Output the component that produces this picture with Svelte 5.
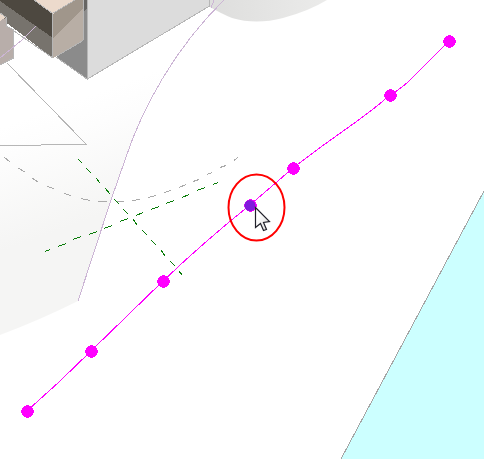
<script>
  const nodes = [[27, 411], [91, 351], [163, 281], [293, 168], [390, 95], [449, 41]];
</script>

<main>
  <svg viewBox="0 0 484 459" role="img" aria-label="Spline with control points">
    <defs>
      <linearGradient id="ground" gradientUnits="userSpaceOnUse" x1="62" y1="105" x2="102" y2="215">
        <stop offset="0" stop-color="#ffffff" />
        <stop offset=".25" stop-color="#fdfdfd" />
        <stop offset="1" stop-color="#f5f5f4" />
      </linearGradient>
      <linearGradient id="disc" gradientUnits="userSpaceOnUse" x1="215" y1="0" x2="325" y2="0">
        <stop offset="0" stop-color="#dededd" />
        <stop offset="1" stop-color="#ebebea" />
      </linearGradient>
      <linearGradient id="pointer" x1="0" y1="0" x2="1" y2="1">
        <stop offset=".3" stop-color="#ffffff" />
        <stop offset="1" stop-color="#d8d8d8" />
      </linearGradient>
    </defs>

    <path fill="url(#ground)" d="M0 60H171C151 92 135 129 125 160L111 200L78 301Q40 320 0 335Z" />
    <path fill="url(#disc)" d="M210 0V7Q222 14 232 18Q256 25 283 18Q309 11 327 0Z" />

    <g shape-rendering="crispEdges">
      <path fill="#dcdcdc" d="M87 0H210V6L87 79Z" />
      <path fill="#8b8b8b" d="M83 0H87V79L56 57L83 40Z" />
      <path fill="#666563" d="M83 0H87V9L83 12Z" />
      <path fill="#77736d" d="M0 0H53V58L0 18Z" />
      <path fill="#4d4840" d="M0 0H36L53 14V38L0 1Z" />
      <path fill="#ecdacc" d="M34 0H75L53 14Z" />
      <path fill="#a0968b" d="M53 14L75 0H83V9L53 38Z" />
      <path fill="#b8aea5" d="M53 38L83 9V41L53 58Z" />
      <path fill="#b8aeaa" d="M0 20L7 18V26L13 30V58L0 65Z" />
      <path fill="#ecdacc" d="M0 13L6 17L0 21Z" />
    </g>

    <g class="line" stroke="#b6b6b6">
      <path d="M34 0L52.500 13.500L75 0M52.500 14V58M57 56L83 40.500M83.500 0V40M87.500 0V79L209.500 6V0M53 58L14 31M56 57L87 79M0 13L6.500 17.500V26L13.500 30V58L0 65M7 63L86.500 144.500H41M41 145.500H0" />
    </g>
    <g class="line" stroke="#ccb5d5">
      <path d="M224 0C175 48 142 108 125 160L111 200L78 301M0 58L22 40L36 26M214 0L211 8" />
    </g>
    <path class="line" stroke="#aaaaaa" d="M4 157l6 5M18 168l7 4M32 178l6 4M47 186l7 3M64 193l7 3M81 198.500l9 2M98 201.500h9M116 201.500h8M132 200.500l8-1M148 197.500l8-2M164 192.500l7-2M179 187.500l7-3M193 181.500l6-2M207 174.500l5-2M220 167.500l6-2M234 160.500l4-3" />
    <path class="line" stroke="#087c08" d="M45 251.500l5-2M58 246.500l8-3M73 239.500l8-3M89 234.500l8-3M104 228.500l8-3M120 221.500l8-3M136 215.500l7-3M151 209.500l8-3M166 203.500l8-3M182 197.500l7-3M197 190.500l8-3M213 184.500l5-2M78 159l4 4M86 168l5 5M96 178l4 5M105 188l5 6M114 199l5 5M123 209l5 5M133 219l4 6M142 230l5 5M151 240l5 5M161 250l4 6M170 261l5 5M179 271l3 4" />

    <path fill="#ccffff" d="M484 191V459H341Z" />
    <path class="line" stroke="#a5a5a5" d="M484 191L341 459" />

    <path class="line" stroke="#ff00ff" d="M27 411Q60 382 91 351L163 281Q205 241 250 205L293 168Q320 147 346 129Q372 111 390 95Q404 87 413 77L449 41" />
    {#each nodes as [x, y]}
      <circle cx={x + 0.5} cy={y + 0.5} r="6.300" fill="#ff00ff" shape-rendering="crispEdges" />
    {/each}
    <circle cx="250.500" cy="205.500" r="6.300" fill="#ff00ff" shape-rendering="crispEdges" />
    <circle cx="250" cy="205.500" r="5.500" fill="#801bdc" />
    <ellipse cx="256.500" cy="207.500" rx="28" ry="33" fill="none" stroke="#ff0000" stroke-width="2" />
    <path fill="url(#pointer)" stroke="#20202a" stroke-width="1.200" d="M255.500 207.500V227.500L260.500 223.500L263.500 230.500L266.500 229.500L263.500 222.500L269.500 221.500Z" />
  </svg>
</main>

<style>
  :global(body) { margin: 0; background: #ffffff; }
  main { width: 100%; overflow: hidden; }
  svg { display: block; width: 100%; height: auto; }
  .line { fill: none; stroke-width: 1; shape-rendering: crispEdges; }
</style>
